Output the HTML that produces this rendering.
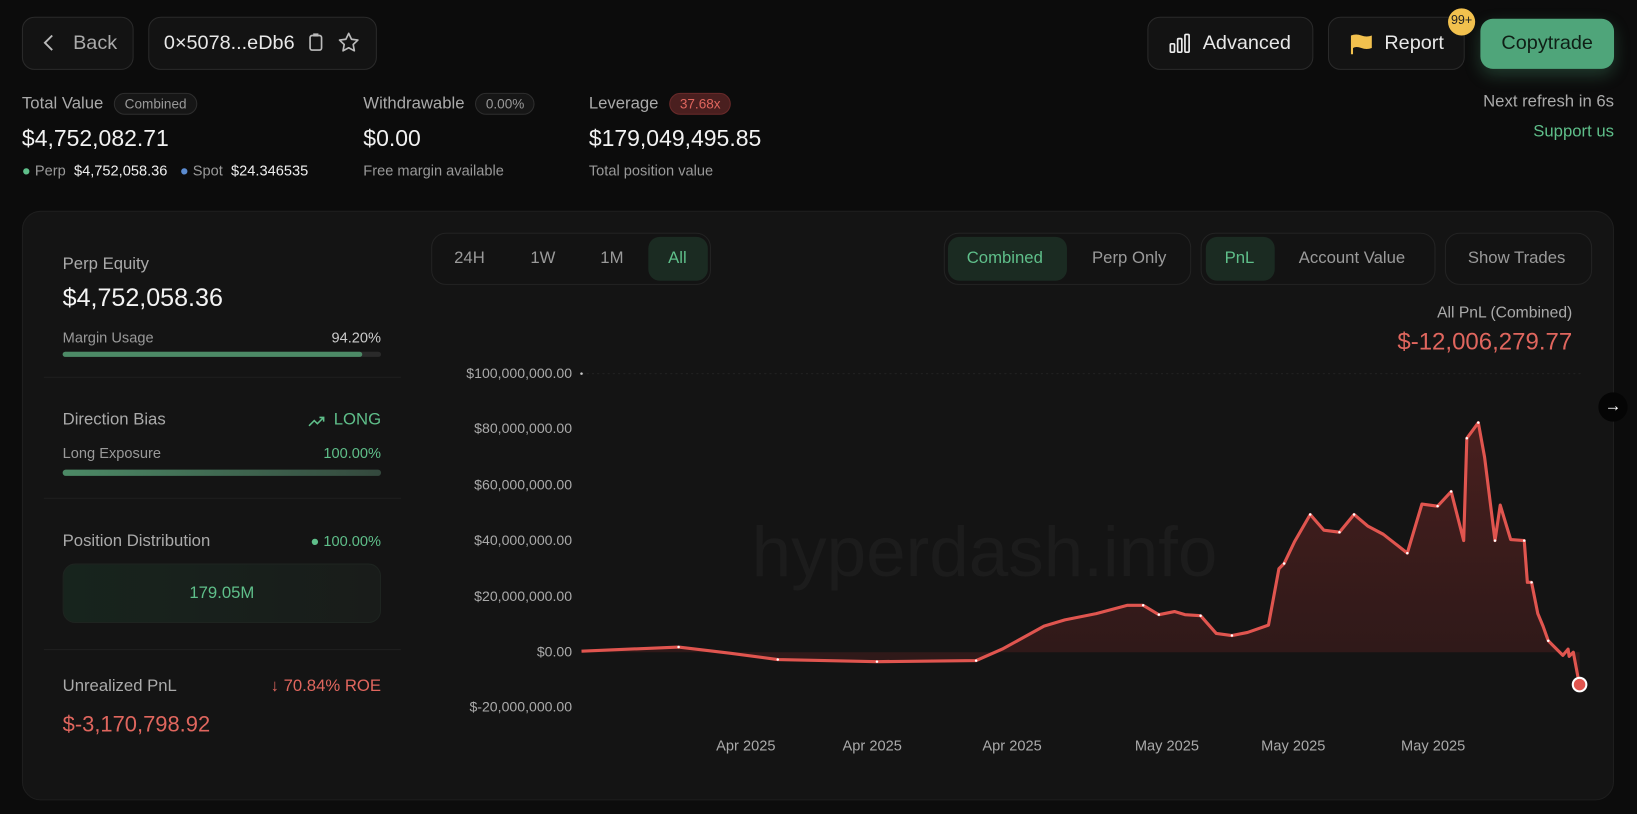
<!DOCTYPE html>
<html><head><meta charset="utf-8"><style>
html,body{margin:0;padding:0;background:#0c0c0c;width:1637px;height:814px;overflow:hidden}
#w{position:absolute;left:0;top:0;width:1568px;height:780px;transform:scale(1.04400,1.04359);transform-origin:0 0;font-family:"Liberation Sans",sans-serif;color:#e8e8e8}
.a{position:absolute;white-space:nowrap}
.btn{position:absolute;border:1px solid #2a2a2a;background:#131313;border-radius:12px;box-sizing:border-box}
.pill{display:inline-block;border:1px solid #2e2e2e;border-radius:12px;padding:2px 9px;font-size:13px;color:#999;background:#161616}
.g{color:#5fbf8a}.r{color:#e0665e}.m{color:#9a9a9a}
.seg{position:absolute;border:1px solid #232323;border-radius:14px;background:#131313;box-sizing:border-box}
.on{position:absolute;background:#1b2b22;border-radius:11px}
.bar{position:absolute;height:5px;border-radius:3px;background:#2a2a2a}
</style></head><body><div id="w">
<div class="btn" style="left:21px;top:16px;width:107px;height:51px"></div>
<svg class="a" style="left:40px;top:31px" width="14" height="20"><path d="M10 3 L3 10 L10 17" stroke="#bbb" stroke-width="1.8" fill="none"/></svg>
<div class="a m" style="left:70px;top:31px;font-size:19px;color:#aaa">Back</div>
<div class="btn" style="left:142px;top:16px;width:219px;height:51px"></div>
<div class="a" style="left:157px;top:31px;font-size:19px">0×5078...eDb6</div>
<svg class="a" style="left:294px;top:31px" width="18" height="20"><rect x="3" y="3" width="11" height="14" rx="2" stroke="#bbb" stroke-width="1.6" fill="none"/><rect x="6" y="1" width="5" height="3" fill="#bbb"/></svg>
<svg class="a" style="left:322px;top:29px" width="24" height="24"><path d="M12 3l2.7 5.6 6.1.8-4.5 4.2 1.1 6.1L12 16.8 6.6 19.7l1.1-6.1L3.2 9.4l6.1-.8z" stroke="#bbb" stroke-width="1.6" fill="none" stroke-linejoin="round"/></svg>

<div class="btn" style="left:1099px;top:16px;width:159px;height:51px"></div>
<svg class="a" style="left:1119px;top:31px" width="24" height="22"><rect x="2" y="11" width="4" height="8" rx="1" stroke="#eee" stroke-width="1.6" fill="none"/><rect x="9" y="6" width="4" height="13" rx="1" stroke="#eee" stroke-width="1.6" fill="none"/><rect x="16" y="2" width="4" height="17" rx="1" stroke="#eee" stroke-width="1.6" fill="none"/></svg>
<div class="a" style="left:1152px;top:31px;font-size:19px">Advanced</div>
<div class="btn" style="left:1272px;top:16px;width:131px;height:51px"></div>
<svg class="a" style="left:1292px;top:30px" width="24" height="24"><path d="M2 4q5-2 10 0t10 0v12q-5 2-10 0t-8 0v6H2z" fill="#f2c14e"/></svg>
<div class="a" style="left:1326px;top:31px;font-size:19px">Report</div>
<div class="a" style="left:1387px;top:8px;width:26px;height:26px;border-radius:13px;background:#f2c14e;color:#222;font-size:12px;text-align:center;line-height:22px">99+</div>
<div class="a" style="left:1418px;top:18px;width:128px;height:48px;border-radius:12px;background:#4fa57a;box-shadow:0 6px 16px rgba(79,165,122,.3);color:#0f1f16;font-size:19px;text-align:center;line-height:47px">Copytrade</div>

<div class="a" style="left:21px;top:89px;font-size:16px;color:#aaa">Total Value <span class="pill" style="margin-left:6px">Combined</span></div>
<div class="a" style="left:21px;top:120px;font-size:22px;color:#f2f2f2">$4,752,082.71</div>
<div class="a" style="left:21px;top:155px;font-size:14px;color:#999"><span class="g">●</span> Perp <span style="color:#eee;margin-left:4px">$4,752,058.36</span> <span style="color:#5b8bd0;margin-left:8px">●</span> Spot <span style="color:#eee;margin-left:4px">$24.346535</span></div>
<div class="a" style="left:348px;top:89px;font-size:16px;color:#aaa">Withdrawable <span class="pill" style="margin-left:6px">0.00%</span></div>
<div class="a" style="left:348px;top:120px;font-size:22px;color:#f2f2f2">$0.00</div>
<div class="a" style="left:348px;top:155px;font-size:14px;color:#999">Free margin available</div>
<div class="a" style="left:564px;top:89px;font-size:16px;color:#aaa">Leverage <span class="pill" style="margin-left:6px;background:#4a1f1f;border-color:#6a2a2a;color:#e0665e">37.68x</span></div>
<div class="a" style="left:564px;top:120px;font-size:22px;color:#f2f2f2">$179,049,495.85</div>
<div class="a" style="left:564px;top:155px;font-size:14px;color:#999">Total position value</div>
<div class="a" style="right:22px;top:89px;font-size:16px;color:#aaa">Next refresh in 6s</div>
<div class="a g" style="right:22px;top:118px;font-size:16px">Support us</div>

<div class="a" style="left:21px;top:202px;width:1525px;height:565px;border-radius:18px;background:#141414;border:1px solid #1e1e1e;box-sizing:border-box"></div>
<div class="a" style="left:60px;top:245px;font-size:16px;color:#aaa">Perp Equity</div>
<div class="a" style="left:60px;top:272px;font-size:24px;color:#f4f4f4">$4,752,058.36</div>
<div class="a" style="left:60px;top:315px;font-size:14px;color:#999">Margin Usage</div>
<div class="a" style="right:1203px;top:315px;font-size:14px;color:#ccc">94.20%</div>
<div class="bar" style="left:60px;top:337px;width:305px"></div><div class="bar" style="left:60px;top:337px;width:287px;background:#4c8a66"></div>
<div class="a" style="left:42px;top:361px;width:342px;height:1px;background:#1f1f1f"></div>
<div class="a" style="left:60px;top:394px;font-size:16px;color:#aaa">Direction Bias</div>
<svg class="a" style="left:294px;top:395px" width="20" height="16"><path d="M2 13l5-5 3 3 6-6M12 5h4v4" stroke="#5fbf8a" stroke-width="1.5" fill="none"/></svg>
<div class="a g" style="right:1203px;top:394px;font-size:16px">LONG</div>
<div class="a" style="left:60px;top:426px;font-size:14px;color:#999">Long Exposure</div>
<div class="a g" style="right:1203px;top:426px;font-size:14px">100.00%</div>
<div class="bar" style="left:60px;top:450px;width:305px;height:6px;background:linear-gradient(90deg,#4c8a66,#34483d)"></div>
<div class="a" style="left:42px;top:477px;width:342px;height:1px;background:#1f1f1f"></div>
<div class="a" style="left:60px;top:510px;font-size:16px;color:#aaa">Position Distribution</div>
<div class="a g" style="right:1203px;top:510px;font-size:14px">● 100.00%</div>
<div class="a" style="left:60px;top:540px;width:305px;height:57px;border-radius:12px;background:linear-gradient(90deg,#17241d,#191c1a);border:1px solid #1e2420;box-sizing:border-box;color:#5fbf8a;font-size:16px;text-align:center;line-height:55px">179.05M</div>
<div class="a" style="left:42px;top:622px;width:342px;height:1px;background:#1f1f1f"></div>
<div class="a" style="left:60px;top:649px;font-size:16px;color:#aaa">Unrealized PnL</div>
<div class="a r" style="right:1203px;top:649px;font-size:16px">↓ 70.84% ROE</div>
<div class="a r" style="left:60px;top:683px;font-size:21px">$-3,170,798.92</div>

<div class="seg" style="left:413px;top:223px;width:268px;height:50px"></div>
<div class="on" style="left:621px;top:227px;width:57px;height:42px"></div>
<div class="a m" style="left:435px;top:239px;font-size:16px">24H</div>
<div class="a m" style="left:508px;top:239px;font-size:16px">1W</div>
<div class="a m" style="left:575px;top:239px;font-size:16px">1M</div>
<div class="a g" style="left:640px;top:239px;font-size:16px">All</div>
<div class="seg" style="left:904px;top:223px;width:237px;height:50px"></div>
<div class="on" style="left:908px;top:227px;width:114px;height:42px"></div>
<div class="a g" style="left:926px;top:239px;font-size:16px">Combined</div>
<div class="a m" style="left:1046px;top:239px;font-size:16px">Perp Only</div>
<div class="seg" style="left:1150px;top:223px;width:225px;height:50px"></div>
<div class="on" style="left:1155px;top:227px;width:66px;height:42px"></div>
<div class="a g" style="left:1173px;top:239px;font-size:16px">PnL</div>
<div class="a m" style="left:1244px;top:239px;font-size:16px">Account Value</div>
<div class="seg" style="left:1384px;top:223px;width:141px;height:50px"></div>
<div class="a m" style="left:1406px;top:239px;font-size:16px">Show Trades</div>

<div class="a" style="right:62px;top:291px;font-size:15px;color:#aaa">All PnL (Combined)</div>
<div class="a r" style="right:62px;top:314px;font-size:23px">$-12,006,279.77</div>
<div class="a" style="left:1531px;top:376px;width:28px;height:28px;border-radius:14px;background:#050505;color:#fff;text-align:center;line-height:27px;font-size:16px">→</div>

<div class="a" style="left:720px;top:490px;font-size:68px;color:#1c1c1c">hyperdash.info</div>
<div class="a" style="left:420px;top:331px;width:128px;text-align:right;font-size:13.5px;color:#aaa;line-height:53.4px">$100,000,000.00<br>$80,000,000.00<br>$60,000,000.00<br>$40,000,000.00<br>$20,000,000.00<br>$0.00<br>$-20,000,000.00</div>
<div class="a" style="left:686px;top:706px;font-size:14px;color:#aaa">Apr 2025</div>
<div class="a" style="left:807px;top:706px;font-size:14px;color:#aaa">Apr 2025</div>
<div class="a" style="left:941px;top:706px;font-size:14px;color:#aaa">Apr 2025</div>
<div class="a" style="left:1087px;top:706px;font-size:14px;color:#aaa">May 2025</div>
<div class="a" style="left:1208px;top:706px;font-size:14px;color:#aaa">May 2025</div>
<div class="a" style="left:1342px;top:706px;font-size:14px;color:#aaa">May 2025</div>
<svg class="a" style="left:0;top:0" width="1568" height="780">
<defs><linearGradient id="fg" x1="0" y1="0" x2="0" y2="1"><stop offset="0" stop-color="#8a2e2b" stop-opacity=".45"/><stop offset="1" stop-color="#5a2020" stop-opacity=".35"/></linearGradient></defs>
<line x1="557" y1="358" x2="1515" y2="358" stroke="#222" stroke-dasharray="2 3"/>
<circle cx="557" cy="358" r="1.2" fill="#ccc"/>
<path id="p" d="M557 624 L650 620 L700 626 L745 632 L840 634 L935 633 L960 622 L1000 600 L1020 594 L1050 588 L1080 580 L1095 580 L1110 589 L1125 586 L1135 589 L1150 590 L1165 607 L1180 609 L1195 606 L1215 599 L1225 545 L1230 540 L1240 519 L1255 493 L1268 508 L1283 510 L1297 493 L1310 504 L1325 512 L1348 530 L1362 483 L1377 485 L1390 471 L1402 518 L1405 420 L1416 405 L1422 438 L1432 518 L1437 484 L1447 517 L1460 518 L1463 558 L1467 558 L1473 588 L1478 600 L1483 614 L1497 628 L1502 622 L1503 629 L1507 625 L1513 657" fill="none"/>
<path d="M557 624 L650 620 L700 626 L745 632 L840 634 L935 633 L960 622 L1000 600 L1020 594 L1050 588 L1080 580 L1095 580 L1110 589 L1125 586 L1135 589 L1150 590 L1165 607 L1180 609 L1195 606 L1215 599 L1225 545 L1230 540 L1240 519 L1255 493 L1268 508 L1283 510 L1297 493 L1310 504 L1325 512 L1348 530 L1362 483 L1377 485 L1390 471 L1402 518 L1405 420 L1416 405 L1422 438 L1432 518 L1437 484 L1447 517 L1460 518 L1463 558 L1467 558 L1473 588 L1478 600 L1483 614 L1497 628 L1502 622 L1503 629 L1507 625 L1513 657 L1513 625 L557 625Z" fill="url(#fg)"/>
<use href="#p" stroke="#e0554f" stroke-width="3" stroke-linejoin="round"/>
<g fill="#fff"><circle cx="650" cy="620" r="1.2"/><circle cx="745" cy="632" r="1.2"/><circle cx="840" cy="634" r="1.2"/><circle cx="935" cy="633" r="1.2"/><circle cx="1095" cy="580" r="1.2"/><circle cx="1110" cy="589" r="1.2"/><circle cx="1150" cy="590" r="1.2"/><circle cx="1180" cy="609" r="1.2"/><circle cx="1230" cy="540" r="1.2"/><circle cx="1255" cy="493" r="1.2"/><circle cx="1283" cy="510" r="1.2"/><circle cx="1297" cy="493" r="1.2"/><circle cx="1348" cy="530" r="1.2"/><circle cx="1377" cy="485" r="1.2"/><circle cx="1390" cy="471" r="1.2"/><circle cx="1405" cy="420" r="1.2"/><circle cx="1416" cy="405" r="1.2"/><circle cx="1432" cy="518" r="1.2"/><circle cx="1460" cy="518" r="1.2"/><circle cx="1467" cy="558" r="1.2"/><circle cx="1483" cy="614" r="1.2"/></g>
<circle cx="1513" cy="656" r="6.5" fill="#e0554f" stroke="#fff" stroke-width="2"/>
</svg>
</div></body></html>
